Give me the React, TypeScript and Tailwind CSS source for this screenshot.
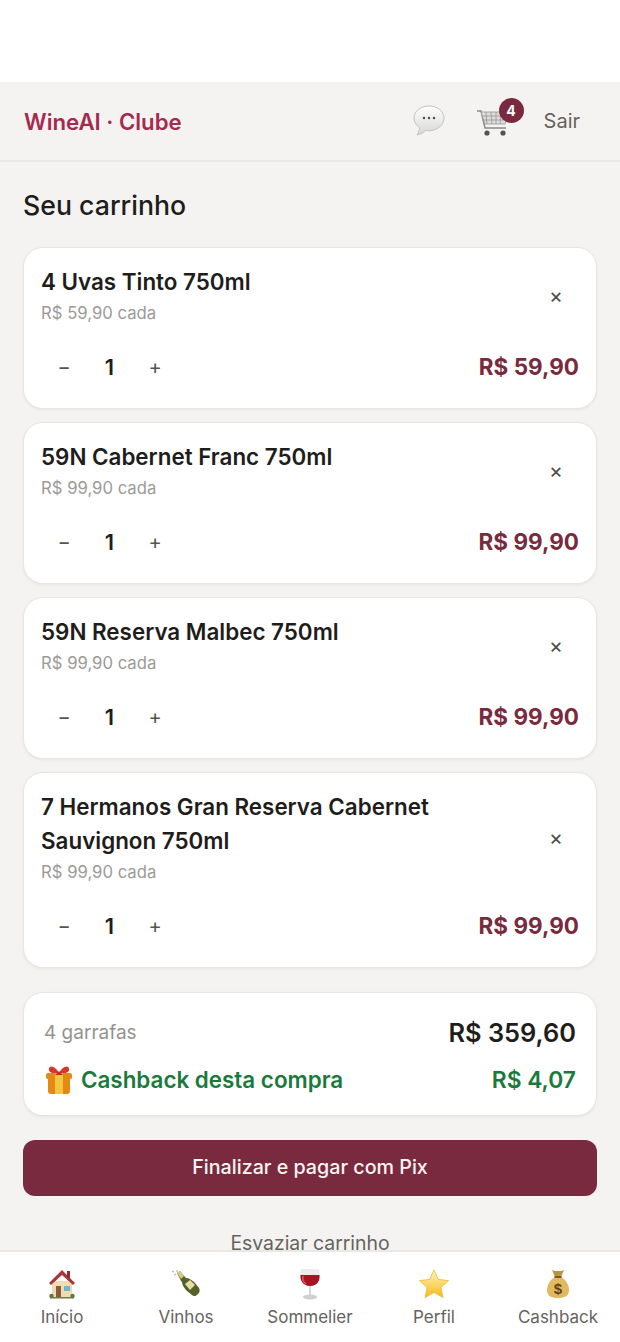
import React from "react";

// ─── Emoji drawings ───────────────────────────────────────────────────────────

function SpeechEmoji() {
  return (
    <svg width="34" height="34" viewBox="0 0 34 34">
      <defs>
        <linearGradient id="speech" x1="0" y1="0" x2="0" y2="1">
          <stop offset="0" stopColor="#ffffff" />
          <stop offset="1" stopColor="#d6d6d4" />
        </linearGradient>
      </defs>
      <path
        d="M17 2C9 2 2 7 2 14c0 4 2.200 7.400 5.600 9.600-.3 2.800-1.200 5-2.600 7.400 3.400-.6 6.400-2.200 8.600-4.600 1.100.2 2.400.4 3.400.4 8 0 15-5.800 15-12.800S25 2 17 2z"
        fill="url(#speech)"
        stroke="#c2c2c0"
        strokeWidth="1"
      />
      <circle cx="12" cy="14" r="1.200" fill="#4a4a4a" />
      <circle cx="17" cy="14" r="1.200" fill="#4a4a4a" />
      <circle cx="22" cy="14" r="1.200" fill="#4a4a4a" />
    </svg>
  );
}

function CartEmoji() {
  return (
    <svg width="36" height="34" viewBox="0 0 36 34" fill="none">
      <path d="M1 7h4l4 17h21" stroke="#8a8a8a" strokeWidth="1.500" />
      <path d="M5 8h27l-3 12H9z" fill="#dcdcdc" stroke="#a4a4a4" strokeWidth="1" />
      <path
        d="M10 8l1 12M15 8l1 12M20 8v12M25 8l-1 12M6 12h25M7 16h23"
        stroke="#969696"
        strokeWidth="0.800"
      />
      <circle cx="11" cy="29" r="2.600" fill="#55534f" />
      <circle cx="27" cy="29" r="2.600" fill="#55534f" />
    </svg>
  );
}

function HouseEmoji() {
  return (
    <svg width="30" height="32" viewBox="0 0 30 32">
      <rect x="5" y="13" width="20" height="16" fill="#efdcb4" />
      <path d="M15 2L2 15l2 2L15 7l11 10 2-2z" fill="#a8353a" />
      <rect x="20" y="3" width="3" height="7" fill="#8e2d32" />
      <rect x="9" y="18" width="5" height="11" fill="#8d5a3c" />
      <rect x="17" y="18" width="6" height="5" fill="#6fb6cf" />
      <circle cx="4.500" cy="28" r="2.200" fill="#5c7a3c" />
      <circle cx="25.500" cy="28" r="2.200" fill="#5c7a3c" />
      <rect x="3" y="29" width="24" height="1.500" fill="#6b7a50" />
    </svg>
  );
}

function BottleEmoji() {
  return (
    <svg width="32" height="32" viewBox="0 0 32 32">
      <path d="M2 3l2 1M4 7l2-1M7 2l0 2" stroke="#c8c2b4" strokeWidth="1.500" />
      <path d="M7 5l3-2 5 6 1 1c3 0 6 2 9 5l4 5c1 2 1 4-1 6s-4 3-6 1l-5-4c-3-3-5-6-5-9l-1-1z" fill="#56602a" />
      <path d="M7 5l3-2 4 5-3 3z" fill="#d9c98a" />
      <path d="M15 16l5-4 5 5-5 5z" fill="#e8dca4" />
    </svg>
  );
}

function WineEmoji() {
  return (
    <svg width="26" height="34" viewBox="0 0 26 34">
      <path d="M4 2h18c2 7 1 16-9 17C3 18 2 9 4 2z" fill="#ececec" />
      <path d="M3.500 8h19c.5 6-2 10.500-9.500 11C6 18.500 3 14 3.500 8z" fill="#a5141f" />
      <path d="M6 9c-.5 3 0 6 3 8" stroke="#e2525c" strokeWidth="1.500" fill="none" />
      <rect x="12" y="19" width="2" height="10" fill="#d8d8d8" />
      <ellipse cx="13" cy="30" rx="7" ry="2.500" fill="#cfcfcf" />
    </svg>
  );
}

function StarEmoji() {
  return (
    <svg width="32" height="32" viewBox="0 0 32 32">
      <defs>
        <linearGradient id="star" x1="0" y1="0" x2="0" y2="1">
          <stop offset="0" stopColor="#fff6c4" />
          <stop offset="1" stopColor="#f7b916" />
        </linearGradient>
      </defs>
      <path
        d="M16 2l4.300 9.400 10.200 1.200-7.600 6.900 2.100 10.100L16 24.500l-9 5.100 2.100-10.100-7.600-6.900 10.200-1.200z"
        fill="url(#star)"
        stroke="#eeb92c"
        strokeWidth="0.800"
        strokeLinejoin="round"
      />
    </svg>
  );
}

function MoneyBagEmoji() {
  return (
    <svg width="24" height="32" viewBox="0 0 24 32">
      <path d="M6 2c2 1 3 1 6 1s4 0 6-1l-3 7H9z" fill="#bd9243" />
      <path d="M9 9h6c5 3 8 8 8 13 0 6-4 8-11 8S1 28 1 22c0-5 3-10 8-13z" fill="#e3b95e" />
      <rect x="8.500" y="8" width="7" height="2" fill="#7d5a25" />
      <text
        x="12"
        y="26"
        textAnchor="middle"
        fontSize="15"
        fontWeight="700"
        fontFamily="'Liberation Sans', sans-serif"
        fill="#5b4320"
      >
        $
      </text>
    </svg>
  );
}

function GiftEmoji() {
  return (
    <svg width="30" height="30" viewBox="0 0 30 30">
      <path d="M15 8C11 1 6 0 5 3.500S8 9 15 8zM15 8c4-7 9-8 10-4.500S22 9 15 8z" fill="#d9362b" />
      <path d="M2 10q0-2 2-2h22q2 0 2 2v3q0 1-2 1v12q0 3-3 3H7q-3 0-3-3V14q-2 0-2-1z" fill="#e48a14" />
      <rect x="11" y="8" width="8" height="21" fill="#f4c63c" />
      <path d="M15 6l-4 4h8z" fill="#c82c23" />
    </svg>
  );
}

// ─── Data ─────────────────────────────────────────────────────────────────────

const items = [
  { name: "4 Uvas Tinto 750ml", price: "R$ 59,90" },
  { name: "59N Cabernet Franc 750ml", price: "R$ 99,90" },
  { name: "59N Reserva Malbec 750ml", price: "R$ 99,90" },
  { name: "7 Hermanos Gran Reserva Cabernet Sauvignon 750ml", price: "R$ 99,90" },
];

const tabs = [
  { label: "Início", icon: <HouseEmoji /> },
  { label: "Vinhos", icon: <BottleEmoji /> },
  { label: "Sommelier", icon: <WineEmoji /> },
  { label: "Perfil", icon: <StarEmoji /> },
  { label: "Cashback", icon: <MoneyBagEmoji /> },
];

// ─── Component ────────────────────────────────────────────────────────────────

function CartItem({ name, price }: { name: string; price: string }) {
  return (
    <div className="rounded-[20px] border border-[#e8e6e3] bg-white pl-[17px] pr-[17px] pt-[17px] pb-[25px] shadow-[0_1px_3px_rgba(0,0,0,0.06)]">
      <div className="flex items-center justify-between">
        <div className="w-[420px]">
          <div className="text-[22.4px] leading-[34px] font-semibold text-[#1f1d1b]">{name}</div>
          <div className="mt-[2px] text-[16.7px] leading-[24px] text-[#9c9a97]">{price} cada</div>
        </div>
        <button className="mr-[16px] text-[21px] leading-none text-[#4f4d4a]">×</button>
      </div>
      <div className="mt-[26px] flex h-[32px] items-center justify-between">
        <div className="flex items-center">
          <span className="w-[46px] text-center text-[20px] text-[#55534f]">−</span>
          <span className="w-[45px] text-center text-[22px] font-semibold text-[#1f1d1b]">1</span>
          <span className="w-[46px] text-center text-[20px] text-[#55534f]">+</span>
        </div>
        <span className="text-[22.5px] font-bold text-[#7a2a3e]">{price}</span>
      </div>
    </div>
  );
}

export default function App() {
  return (
    <div className="flex h-[1342px] w-[620px] flex-col overflow-hidden bg-white font-['Inter',sans-serif]">
      <div className="h-[82px] shrink-0 bg-white" />

      {/* Header */}
      <header className="flex h-[80px] shrink-0 items-center border-b-2 border-[#e9e8e5] bg-[#f4f3f1] pl-[24px] pr-[40px]">
        <span className="mt-[2px] text-[22.2px] font-semibold text-[#a52a50]">WineAI · Clube</span>
        <div className="ml-auto">
          <SpeechEmoji />
        </div>
        <div className="relative ml-[30px] mr-[-2px]">
          <CartEmoji />
          <span className="absolute -top-[6px] -right-[12px] flex h-[25px] w-[25px] items-center justify-center rounded-full bg-[#7a2a3e] text-[14px] font-bold text-white">
            4
          </span>
        </div>
        <span className="ml-[34px] text-[20px] text-[#66635f]">Sair</span>
      </header>

      {/* Content */}
      <main className="min-h-0 flex-1 overflow-hidden bg-[#f4f3f1] px-[23px]">
        <h1 className="mt-[23px] text-[26.7px] leading-[40px] font-medium text-[#1f1d1b]">Seu carrinho</h1>

        <div className="mt-[22px] flex flex-col gap-[13px]">
          {items.map((item) => (
            <CartItem key={item.name} name={item.name} price={item.price} />
          ))}
        </div>

        {/* Summary */}
        <div className="mt-[24px] rounded-[20px] border border-[#e8e6e3] bg-white px-[20px] pt-[20px] pb-[15px] shadow-[0_1px_3px_rgba(0,0,0,0.06)]">
          <div className="flex h-[40px] items-center justify-between">
            <span className="text-[19px] text-[#94928f]">4 garrafas</span>
            <span className="text-[25.4px] font-semibold text-[#1f1d1b]">R$ 359,60</span>
          </div>
          <div className="mt-[7px] flex h-[40px] items-center justify-between">
            <span className="flex items-center gap-[7px] text-[22.4px] font-semibold text-[#1a7a3c]">
              <GiftEmoji />
              Cashback desta compra
            </span>
            <span className="text-[22.8px] font-semibold text-[#1a7a3c]">R$ 4,07</span>
          </div>
        </div>

        {/* Actions */}
        <button className="mt-[24px] flex h-[56px] w-full items-center justify-center rounded-[12px] bg-[#7a2a3e] text-[19.7px] font-medium text-[#fdf5f3]">
          Finalizar e pagar com Pix
        </button>
        <div className="mt-[32px] text-center text-[19.4px] leading-[30px] text-[#66635f]">Esvaziar carrinho</div>
      </main>

      {/* Bottom tabs */}
      <nav className="flex h-[92px] shrink-0 border-t-2 border-[#e9e8e5] bg-white pt-[15px]">
        {tabs.map((tab) => (
          <div key={tab.label} className="flex flex-1 flex-col items-center">
            <div className="flex h-[34px] items-center">{tab.icon}</div>
            <span className="mt-[3px] text-[17px] leading-[26px] text-[#66635f]">{tab.label}</span>
          </div>
        ))}
      </nav>
    </div>
  );
}
